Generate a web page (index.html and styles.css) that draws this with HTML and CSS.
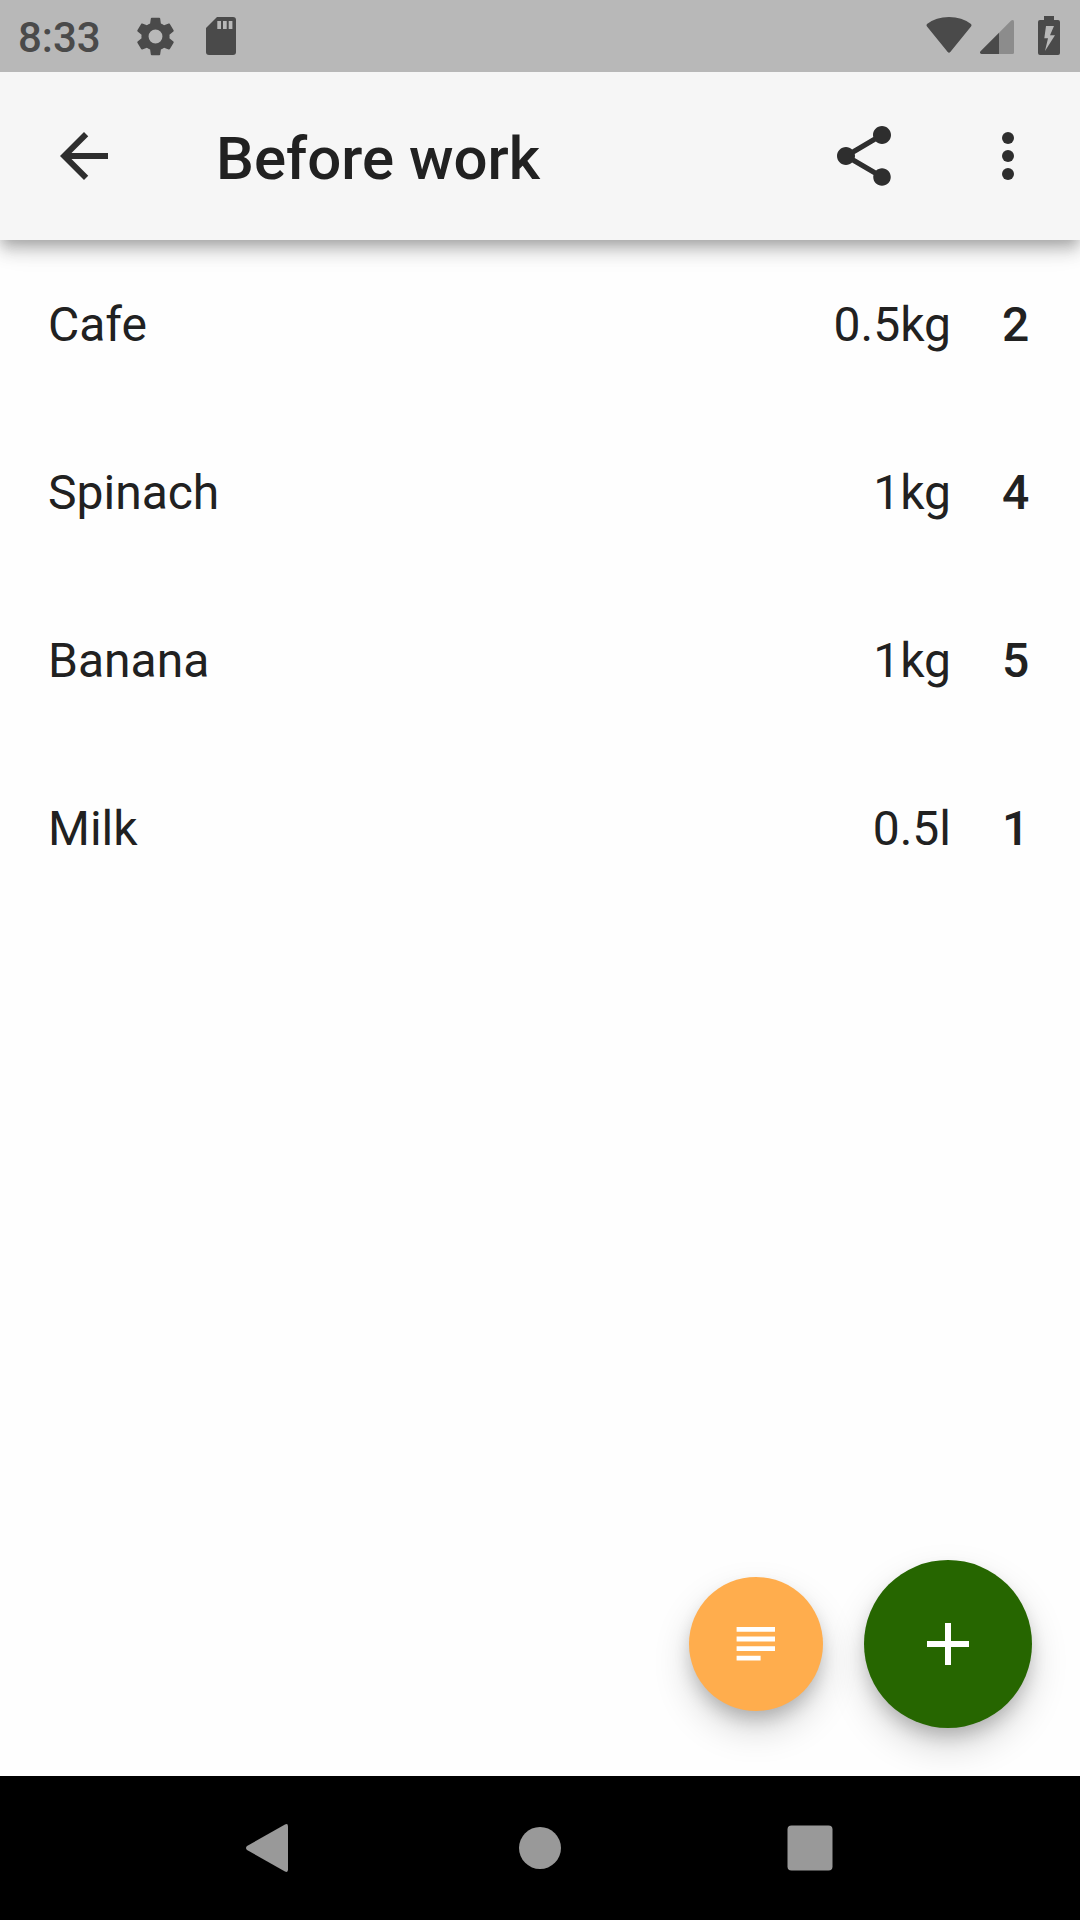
FILE: index.html
```html
<!DOCTYPE html>
<html lang="en">
<head>
<meta charset="utf-8">
<title>Before work</title>
<link rel="stylesheet" href="styles.css">
</head>
<body>
<div class="screen">
  <div class="status-bar">
    <span class="clock">8:33</span>
    <svg class="status-gear" viewBox="0 0 24 24"><path d="M19.43 12.98c.04-.32.07-.64.07-.98s-.03-.66-.07-.98l2.11-1.65c.19-.15.24-.42.12-.64l-2-3.46c-.12-.22-.39-.3-.61-.22l-2.49 1c-.52-.4-1.08-.73-1.69-.98l-.38-2.65C14.46 2.18 14.25 2 14 2h-4c-.25 0-.46.18-.49.42l-.38 2.65c-.61.25-1.17.59-1.69.98l-2.49-1c-.23-.09-.49 0-.61.22l-2 3.46c-.13.22-.07.49.12.64l2.11 1.65c-.04.32-.07.65-.07.98s.03.66.07.98l-2.11 1.65c-.19.15-.24.42-.12.64l2 3.46c.12.22.39.3.61.22l2.49-1c.52.4 1.08.73 1.69.98l.38 2.65c.03.24.24.42.49.42h4c.25 0 .46-.18.49-.42l.38-2.65c.61-.25 1.17-.59 1.69-.98l2.49 1c.23.09.49 0 .61-.22l2-3.46c.12-.22.07-.49-.12-.64l-2.11-1.65zM12 15.700a3.700 3.700 0 1 1 0-7.400 3.700 3.700 0 0 1 0 7.400z"/></svg>
    <svg class="status-card" viewBox="0 0 30 38"><path d="M11 0H27a3 3 0 0 1 3 3V35a3 3 0 0 1-3 3H3a3 3 0 0 1-3-3V11Z"/><path class="contacts" d="M11.3 4h3.7v8h-3.7zM17 4h3.7v8H17zM22.7 4h3.7v8h-3.7z"/></svg>
    <div class="status-right">
      <svg class="wifi" viewBox="0 0 46 36"><path d="M1 7Q10 0 23 0T45 7Q46 8.300 45 9.500L24.300 35Q23 36.600 21.700 35L1 9.500Q0 8.300 1 7Z"/></svg>
      <svg class="signal" viewBox="0 0 34 34"><path class="faint" d="M19 12.800 31.200.6Q34-1 34 2V32.500Q34 34 32.500 34H19Z"/><path d="M19 12.800V34H1.500Q-1 33.500.5 31.300Z"/></svg>
      <svg class="battery" viewBox="0 0 22 39"><path fill-rule="evenodd" d="M6 0H16V4H20a2 2 0 0 1 2 2V37a2 2 0 0 1-2 2H2a2 2 0 0 1-2-2V6a2 2 0 0 1 2-2H6ZM8 10 6.300 22.300H10L7 35 17 19.300H12L16 10Z"/></svg>
    </div>
  </div>
  <header class="app-bar">
    <svg class="icon" viewBox="0 0 24 24"><path d="M20 11H7.830l5.590-5.590L12 4l-8 8 8 8 1.410-1.410L7.830 13H20v-2z"/></svg>
    <h1 class="title">Before work</h1>
    <svg class="icon" viewBox="0 0 24 24"><path d="M18 16.080c-.76 0-1.440.3-1.960.77L8.910 12.700c.05-.23.09-.46.09-.7s-.04-.47-.09-.7l7.050-4.110c.54.5 1.250.81 2.040.81 1.660 0 3-1.340 3-3s-1.340-3-3-3-3 1.340-3 3c0 .24.04.47.09.7L8.040 9.810C7.500 9.310 6.790 9 6 9c-1.660 0-3 1.340-3 3s1.340 3 3 3c.79 0 1.500-.31 2.040-.81l7.120 4.160c-.05.21-.08.43-.08.65 0 1.610 1.310 2.920 2.920 2.920s2.920-1.310 2.920-2.920-1.310-2.920-2.920-2.920z"/></svg>
    <svg class="icon overflow" viewBox="0 0 24 24"><circle cx="12" cy="6" r="2"/><circle cx="12" cy="12" r="2"/><circle cx="12" cy="18" r="2"/></svg>
  </header>
  <main class="content">
    <ul class="items">
      <li class="item"><span class="name">Cafe</span><span class="amount">0.5kg</span><span class="count">2</span></li>
      <li class="item"><span class="name">Spinach</span><span class="amount">1kg</span><span class="count">4</span></li>
      <li class="item"><span class="name">Banana</span><span class="amount">1kg</span><span class="count">5</span></li>
      <li class="item"><span class="name">Milk</span><span class="amount">0.5l</span><span class="count">1</span></li>
    </ul>
    <div class="actions">
      <div class="fab fab-small"><svg viewBox="0 0 24 24"><path d="M14 17H4v2h10v-2zm6-8H4v2h16V9zM4 15h16v-2H4v2zM4 5v2h16V5H4z"/></svg></div>
      <div class="fab"><svg viewBox="0 0 24 24"><path d="M19 13h-6v6h-2v-6H5v-2h6V5h2v6h6v2z"/></svg></div>
    </div>
  </main>
  <nav class="nav-bar">
    <svg viewBox="0 0 60 60"><path d="M7 28 45 6.500Q48 5 48 8.500V51.500Q48 55 45 53.500L7 32Q5 30 7 28Z"/></svg>
    <svg viewBox="0 0 60 60"><circle cx="30" cy="30" r="21"/></svg>
    <svg viewBox="0 0 60 60"><rect x="7.500" y="7.500" width="45" height="45" rx="4"/></svg>
  </nav>
</div>
</body>
</html>
```
FILE: styles.css
```css
* { box-sizing: border-box; }

body {
  margin: 0;
  font-family: Roboto, sans-serif;
  color: #212121;
}

svg { display: block; flex: none; }

.screen {
  display: flex;
  flex-direction: column;
  width: 1080px;
  height: 1920px;
  overflow: hidden;
  background: #fefefe;
}

.status-bar {
  display: flex;
  height: 72px;
  padding: 0 20px 0 18px;
  background: #b8b8b8;
  fill: #4a4a4a;
}

.clock {
  width: 118px;
  padding-top: 13px;
  font-size: 42px;
  line-height: 50px;
  font-weight: 500;
  color: #4a4a4a;
}

.status-gear { width: 45px; height: 45px; margin-top: 13.500px; margin-left: -3.500px; }
.status-card { width: 30px; height: 38px; margin: 17px 0 0 28.500px; }
.contacts { fill: #b8b8b8; }
.status-right { display: flex; margin-left: auto; }
.wifi { width: 46px; height: 36px; margin-top: 17px; }
.signal { width: 34px; height: 34px; margin: 20px 0 0 8.500px; }
.faint { fill: #8c8c8c; }
.battery { width: 22px; height: 39px; margin: 16px 0 0 24px; }

.app-bar {
  display: flex;
  align-items: center;
  flex: none;
  height: 168px;
  padding: 0 36px 0 48px;
  background: #f6f6f6;
  fill: #2e2e2e;
  box-shadow: 0 6px 12px -3px rgba(0, 0, 0, .2), 0 12px 15px rgba(0, 0, 0, .14), 0 3px 30px rgba(0, 0, 0, .12);
  clip-path: inset(0 0 -60px);
}

.icon { width: 72px; height: 72px; }
.overflow { margin-left: 72px; }

.title {
  flex: 1;
  margin: 0 0 0 96px;
  padding-top: 6px;
  font-size: 60px;
  line-height: 70px;
  font-weight: 500;
}

.content {
  display: flex;
  flex: 1;
  flex-direction: column;
  justify-content: space-between;
}

.items { margin: 0; padding: 0; list-style: none; }

.item {
  display: flex;
  align-items: center;
  height: 168px;
  padding: 2px 50px 0 48px;
  font-size: 48px;
  line-height: 56px;
}

.name { flex: 1; }
.count { width: 28px; margin-left: 51px; font-weight: 500; }

.actions {
  display: flex;
  align-items: center;
  justify-content: flex-end;
  gap: 40.800px;
  padding: 0 48px 48px;
}

.fab {
  display: flex;
  align-items: center;
  justify-content: center;
  width: 168px;
  height: 168px;
  border-radius: 50%;
  background: #266600;
  fill: #fff;
  box-shadow: 0 10px 18px -3px rgba(0, 0, 0, .2), 0 18px 36px rgba(0, 0, 0, .17);
}

.fab svg { width: 72px; height: 72px; }

.fab-small {
  width: 134.400px;
  height: 134.400px;
  background: #ffad4d;
}

.fab-small svg { width: 57.600px; height: 57.600px; }

.nav-bar {
  display: flex;
  align-items: center;
  justify-content: center;
  gap: 210px;
  height: 144px;
  background: #000;
  fill: #999;
}

.nav-bar svg { width: 60px; height: 60px; }
```
